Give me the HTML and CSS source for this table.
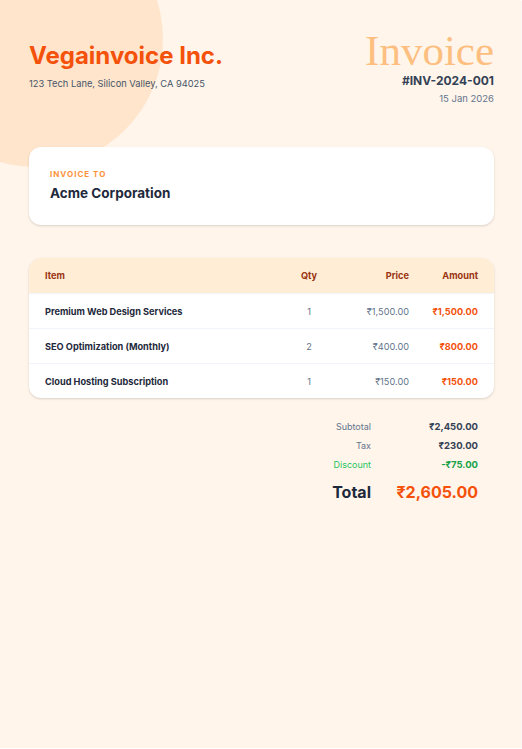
FILE: index.html
```html
<!DOCTYPE html>
<html lang="en">
<head>
<meta charset="utf-8">
<title>Invoice</title>
<link rel="stylesheet" href="styles.css">
</head>
<body>
<div class="page">
  <div class="blob"></div>
  <header class="header">
    <div class="company">
      <h1 class="company-name">Vegainvoice Inc.</h1>
      <p class="company-address">123 Tech Lane, Silicon Valley, CA 94025</p>
    </div>
    <div class="meta">
      <div class="meta-title">Invoice</div>
      <div class="meta-number">#INV-2024-001</div>
      <div class="meta-date">15 Jan 2026</div>
    </div>
  </header>

  <section class="card bill">
    <div class="bill-label">INVOICE TO</div>
    <div class="bill-name">Acme Corporation</div>
  </section>

  <section class="card items">
    <div class="row head">
      <div class="c-item">Item</div>
      <div class="c-qty">Qty</div>
      <div class="c-price">Price</div>
      <div class="c-amt">Amount</div>
    </div>
    <div class="row">
      <div class="c-item">Premium Web Design Services</div>
      <div class="c-qty">1</div>
      <div class="c-price">₹1,500.00</div>
      <div class="c-amt">₹1,500.00</div>
    </div>
    <div class="row">
      <div class="c-item">SEO Optimization (Monthly)</div>
      <div class="c-qty">2</div>
      <div class="c-price">₹400.00</div>
      <div class="c-amt">₹800.00</div>
    </div>
    <div class="row">
      <div class="c-item">Cloud Hosting Subscription</div>
      <div class="c-qty">1</div>
      <div class="c-price">₹150.00</div>
      <div class="c-amt">₹150.00</div>
    </div>
  </section>

  <section class="totals">
    <div class="t-row"><span class="t-label">Subtotal</span><span class="t-val">₹2,450.00</span></div>
    <div class="t-row"><span class="t-label">Tax</span><span class="t-val">₹230.00</span></div>
    <div class="t-row discount"><span class="t-label">Discount</span><span class="t-val">-₹75.00</span></div>
    <div class="t-row total"><span class="t-label">Total</span><span class="t-val">₹2,605.00</span></div>
  </section>
</div>
</body>
</html>
```

FILE: styles.css
```css
* { box-sizing: border-box; }
html, body { margin: 0; padding: 0; background: #ffffff; }
body { font-family: Inter, "Noto Sans", sans-serif; color: #1e293b; }

.page {
  position: relative;
  overflow: hidden;
  width: 521px;
  height: 748px;
  background: #fff5eb;
  padding: 40px 27px 0 29px;
  box-shadow: 0 1px 1px rgba(0,0,0,0.18);
}

.blob {
  position: absolute;
  width: 256px;
  height: 256px;
  left: -93px;
  top: -89px;
  border-radius: 50%;
  background: #ffe5cb;
}

.header {
  position: relative;
  display: flex;
  justify-content: space-between;
  align-items: flex-start;
}

.company-name {
  margin: 0;
  font-size: 24px;
  line-height: 32px;
  font-weight: 700;
  color: #f4510b;
  letter-spacing: 0;
}
.company-address {
  margin: 5px 0 0;
  font-size: 9.3px;
  line-height: 14px;
  color: #475569;
}

.meta { text-align: right; margin-top: -10px; }
.meta-title {
  font-family: "Liberation Serif", "Times New Roman", serif;
  font-size: 43px;
  line-height: 42px;
  color: #fdbf80;
}
.meta-number {
  font-size: 12px;
  font-weight: 700;
  line-height: 15px;
  color: #334155;
  margin-top: 1px;
}
.meta-date {
  font-size: 9.5px;
  line-height: 13px;
  color: #64748b;
  margin-top: 4px;
}

.card {
  position: relative;
  background: #ffffff;
  border-radius: 12px;
  box-shadow: 0 1px 3px rgba(0,0,0,0.10), 0 1px 2px rgba(0,0,0,0.06);
}

.bill {
  margin-top: 42px;
  height: 78px;
  padding: 22px 21px 0;
}
.bill-label {
  font-size: 8px;
  line-height: 10px;
  font-weight: 700;
  letter-spacing: 1px;
  color: #fb923c;
}
.bill-name {
  margin-top: 5px;
  font-size: 13.5px;
  line-height: 18px;
  font-weight: 700;
  color: #1e293b;
}

.items {
  margin-top: 33px;
  overflow: hidden;
}
.row {
  display: grid;
  grid-template-columns: 1fr 40px 80px 69px;
  align-items: center;
  height: 35px;
  padding: 0 16px;
  font-size: 9.2px;
  border-top: 1px solid #f1f5f9;
}
.row.head {
  background: #ffedd5;
  border-top: none;
  font-weight: 700;
  color: #9a3412;
}
.c-item { font-weight: 700; }
.row:not(.head) .c-item { color: #1e293b; }
.c-qty { text-align: center; }
.c-price, .c-amt { text-align: right; }
.row:not(.head) .c-qty,
.row:not(.head) .c-price { color: #64748b; }
.row:not(.head) .c-amt { color: #f4510b; font-weight: 700; }

.totals {
  margin-top: 19px;
  display: flex;
  flex-direction: column;
  align-items: flex-end;
  padding-right: 16px;
}
.t-row {
  display: grid;
  grid-template-columns: 100px 107px;
  align-items: center;
  height: 19px;
  line-height: 19px;
  text-align: right;
}
.t-label { font-size: 9px; color: #64748b; }
.t-val { font-size: 9.5px; font-weight: 700; color: #334155; }
.discount .t-label { color: #22c55e; }
.discount .t-val { color: #16a34a; }
.total { height: 36px; line-height: 36px; }
.total .t-label { font-size: 16px; font-weight: 700; color: #1e293b; }
.total .t-val { font-size: 16px; font-weight: 700; color: #f4510b; }
```
